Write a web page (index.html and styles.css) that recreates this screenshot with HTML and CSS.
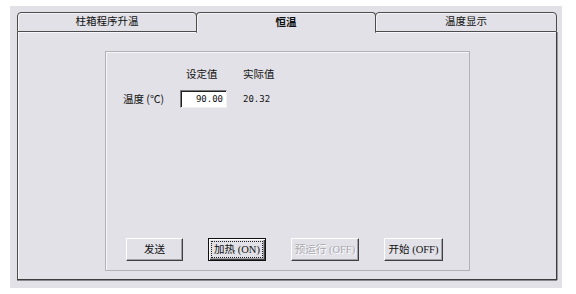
FILE: index.html
```html
<!DOCTYPE html>
<html lang="zh">
<head>
<meta charset="utf-8">
<title>恒温</title>
<link rel="stylesheet" href="styles.css">
</head>
<body>
<div class="window">
  <div class="tabs">
    <div class="tab tab-1">柱箱程序升温</div>
    <div class="tab tab-2 active">恒温</div>
    <div class="tab tab-3">温度显示</div>
  </div>
  <div class="frame">
    <div class="panel">
      <div class="grid">
        <div class="cell"></div>
        <div class="cell head">设定值</div>
        <div class="cell head">实际值</div>
        <div class="cell label">温度 (℃)</div>
        <div class="cell"><div class="input">90.00</div></div>
        <div class="cell value">20.32</div>
      </div>
      <div class="buttons">
        <div class="btn btn-send">发送</div>
        <div class="btn btn-heat default"><span class="focus">加热 (ON)</span></div>
        <div class="btn btn-pre disabled">预运行 (OFF)</div>
        <div class="btn btn-start">开始 (OFF)</div>
      </div>
    </div>
  </div>
</div>
</body>
</html>
```

FILE: styles.css
```css
* { box-sizing: border-box; }
html, body { margin: 0; padding: 0; background: #ffffff; }
body {
  font-family: "Noto Sans CJK SC", "Noto Sans", sans-serif;
  font-size: 10.5px;
  color: #111111;
}
.window {
  margin: 6px 0 0 10px;
  width: 552px;
  height: 282px;
  background: #e2e1e7;
  padding: 6px 5px 8px 7px;
  display: flex;
  flex-direction: column;
}
.tabs {
  display: flex;
  height: 20px;
  flex: none;
}
.tab {
  height: 20px;
  border: 1px solid #4c4c4c;
  border-radius: 4px 4px 0 0;
  box-shadow: inset 1px 1px 0 #f4f4f6;
  display: flex;
  align-items: center;
  justify-content: center;
  line-height: 12px;
  padding-bottom: 2px;
  background: #e2e1e7;
}
.tab-1 { width: 180px; }
.tab-2 { width: 180px; margin-left: -1px; }
.tab-3 { width: 182px; margin-left: -1px; }
.tab.active {
  border-bottom-color: transparent;
  font-weight: bold;
  position: relative;
  z-index: 1;
  height: 21px;
  margin-bottom: -1px;
}
.frame {
  flex: 1;
  border-left: 1px solid #4c4c4c;
  border-right: 1px solid #3c3c3c;
  border-bottom: 1px solid #3c3c3c;
  box-shadow: inset 1px 1px 0 #f8f8fa, 0 1px 0 #8c8c90, 1px 0 0 #9a9a9e;
  padding: 19px 0 0 87px;
}
.panel {
  width: 365px;
  height: 220px;
  border: 1px solid #b2b1b8;
  box-shadow: inset 1px 1px 0 #f6f6f8;
  padding: 16px 0 9px 17px;
  display: flex;
  flex-direction: column;
}
.grid {
  display: grid;
  grid-template-columns: 57px 63px auto;
  grid-template-rows: 12px 18px;
  row-gap: 10px;
  align-items: center;
}
.cell { line-height: 12px; }
.head:nth-child(2) { padding-left: 6px; }
.input {
  width: 47px;
  height: 18px;
  background: #ffffff;
  border-top: 1px solid #7a7a7a;
  border-left: 1px solid #7a7a7a;
  border-right: 1px solid #f0f0f2;
  border-bottom: 1px solid #f0f0f2;
  box-shadow: inset 1px 1px 0 #202020;
  font-family: "DejaVu Sans Mono", monospace;
  font-size: 9px;
  line-height: 16px;
  text-align: right;
  padding-right: 3px;
}
.value {
  font-family: "DejaVu Sans Mono", monospace;
  font-size: 9px;
}
.buttons {
  margin-top: auto;
  display: flex;
  gap: 25px;
  padding-left: 3px;
}
.btn {
  height: 23px;
  background: #e2e1e7;
  border: 1px solid;
  border-color: #ffffff #404040 #404040 #ffffff;
  box-shadow: inset -1px -1px 0 #a2a1a7;
  display: flex;
  align-items: center;
  justify-content: center;
  line-height: 12px;
  font-family: "Liberation Serif", "Noto Sans CJK SC", serif;
  font-size: 10.5px;
  white-space: nowrap;
}
.btn-send { width: 57px; }
.btn-heat { width: 58px; }
.btn-pre { width: 68px; }
.btn-start { width: 59px; }
.btn.default {
  border: 1px solid #101010;
  box-shadow: inset 1px 1px 0 #ffffff, inset -1px -1px 0 #404040, inset -2px -2px 0 #a2a1a7;
}
.focus {
  border: 1px dotted #202020;
  padding: 2px 2px;
  line-height: 11px;
}
.btn.disabled {
  color: #a9a8ae;
  text-shadow: 1px 1px 0 #ffffff;
}
```
